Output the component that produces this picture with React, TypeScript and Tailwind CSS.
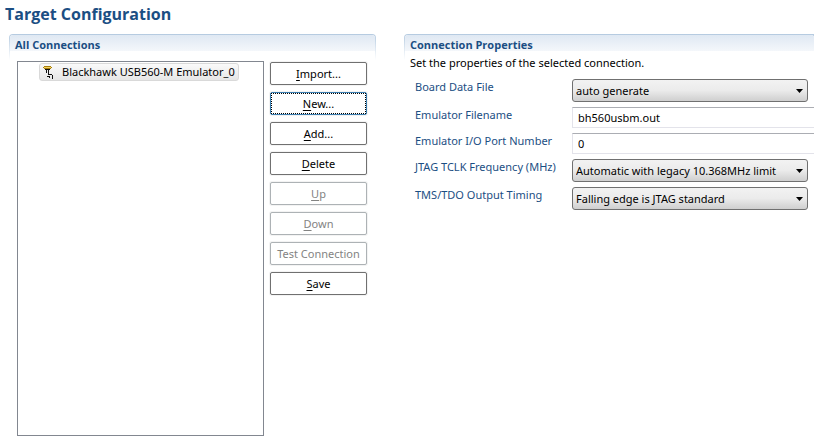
import type { ReactNode } from "react";

function Section({ title, className, children }: { title: string; className: string; children: ReactNode }) {
  return (
    <section className={`flex flex-col rounded-tl-[4px] bg-[linear-gradient(#b4cae0,#ffffff_26px)] pt-px pl-px ${className}`}>
      <div className="flex flex-1 flex-col rounded-t-[3px] bg-white">
        <div className="h-4 rounded-t-[3px] bg-linear-to-b from-[#dfe8f3] to-[#f4f7fb] px-[5px]">
          <h2 className="font-['Open_Sans','Noto_Sans',sans-serif] text-[11px] leading-5 font-bold text-[#1b4e83]">{title}</h2>
        </div>
        {children}
      </div>
    </section>
  );
}

const actions = [
  { mnemonic: "I", rest: "mport..." },
  { mnemonic: "N", rest: "ew...", focused: true },
  { mnemonic: "A", rest: "dd..." },
  { mnemonic: "D", rest: "elete" },
  { mnemonic: "U", rest: "p", disabled: true },
  { mnemonic: "D", rest: "own", disabled: true },
  { mnemonic: "", rest: "Test Connection", disabled: true },
  { mnemonic: "S", rest: "ave" },
];

function Action({ mnemonic, rest, focused, disabled }: { mnemonic: string; rest: string; focused?: boolean; disabled?: boolean }) {
  const tone = disabled
    ? "border-[#adb2b5] text-[#838383]"
    : focused
      ? "border-[#3c7fb1] text-black"
      : "border-[#707070] text-black";
  return (
    <button
      type="button"
      disabled={disabled}
      className={`h-[23px] rounded-[2px] border bg-white whitespace-nowrap ring-1 ring-[#f3f3f3] ${tone}`}
    >
      <span
        className={`flex h-full items-center justify-center border ${focused ? "border-dotted border-black" : "border-transparent"}`}
      >
        <span className="underline underline-offset-2">{mnemonic}</span>
        {rest}
      </span>
    </button>
  );
}

function EmulatorIcon() {
  return (
    <svg width="12" height="14" viewBox="0 0 12 14" shapeRendering="crispEdges" aria-hidden="true">
      <path d="M1 1h7v3H1zM0 2h9v1H0z" fill="#a87c0c" />
      <path d="M1 2h7v1H1z" fill="#f0d460" />
      <path d="M2 4h5v1H2zM3 5h1v3H3zM5 5h1v5H5zM5 9h4v1H5zM4 11h3v1H4zM6 11h1v2H6zM9 10h1v4H9z" fill="#111111" />
    </svg>
  );
}

function Choice({ id, value }: { id: string; value: string }) {
  return (
    <div className="relative w-[236px]">
      <select
        id={id}
        defaultValue={value}
        className="block h-[23px] w-full appearance-none rounded-[3px] border border-[#707070] bg-linear-to-b from-[#f2f2f2] from-0% via-[#ebebeb] via-50% to-[#cfcfcf] to-100% pr-5 pl-[3px] text-black"
      >
        <option>{value}</option>
      </select>
      <svg width="7" height="4" viewBox="0 0 7 4" className="pointer-events-none absolute top-[10px] right-[5px]" aria-hidden="true">
        <path d="M0 0h7L3.5 4z" fill="#000000" />
      </svg>
    </div>
  );
}

const fields = [
  { id: "board", label: "Board Data File", value: "auto generate", choice: true },
  { id: "filename", label: "Emulator Filename", value: "bh560usbm.out", choice: false },
  { id: "port", label: "Emulator I/O Port Number", value: "0", choice: false },
  { id: "frequency", label: "JTAG TCLK Frequency (MHz)", value: "Automatic with legacy 10.368MHz limit", choice: true },
  { id: "timing", label: "TMS/TDO Output Timing", value: "Falling edge is JTAG standard", choice: true },
];

export default function App() {
  return (
    <main className="flex min-h-screen flex-col overflow-x-hidden bg-white pb-[5px] font-['Noto_Sans','Open_Sans',sans-serif] text-[11px] leading-4 text-black">
      <h1 className="h-[34px] pt-[2px] pl-[5px] font-['Open_Sans','Noto_Sans',sans-serif] text-[16px] leading-6 font-bold text-[#1b4e83]">Target Configuration</h1>
      <div className="flex flex-1 gap-7 pl-[9px]">
        <Section title="All Connections" className="w-[367px] shrink-0 rounded-tr-[4px] pr-px">
          <div className="mt-[10px] flex flex-1 gap-[6px] pr-2 pl-[7px]">
            <ul className="flex-1 border border-[#828790] pt-px pl-[21px]">
              <li className="flex h-[18px] w-fit items-center gap-[7px] rounded-[3px] border border-[#d9d9d9] bg-linear-to-b from-[#fafafa] to-[#e6e6e6] pr-[3px] pl-[3px] whitespace-nowrap">
                <EmulatorIcon />
                Blackhawk USB560-M Emulator_0
              </li>
            </ul>
            <div className="mt-px flex w-[97px] flex-col gap-[7px]">
              {actions.map((action) => (
                <Action key={action.mnemonic + action.rest} {...action} />
              ))}
            </div>
          </div>
        </Section>
        <Section title="Connection Properties" className="min-w-0 flex-1">
          <p className="mt-1 pl-[5px]">Set the properties of the selected connection.</p>
          <div className="mt-2 flex flex-col gap-[5px] pl-[10px]">
            {fields.map((field) => (
              <div key={field.id} className="flex">
                <label htmlFor={field.id} className="w-[157px] shrink-0 whitespace-nowrap text-[#1b4e83]">
                  {field.label}
                </label>
                {field.choice ? (
                  <Choice id={field.id} value={field.value} />
                ) : (
                  <input
                    id={field.id}
                    type="text"
                    defaultValue={field.value}
                    className="h-[21px] min-w-0 flex-1 border border-r-0 border-[#e3e3ea] border-t-[#abadb3] bg-white pl-[5px]"
                  />
                )}
              </div>
            ))}
          </div>
        </Section>
      </div>
    </main>
  );
}
